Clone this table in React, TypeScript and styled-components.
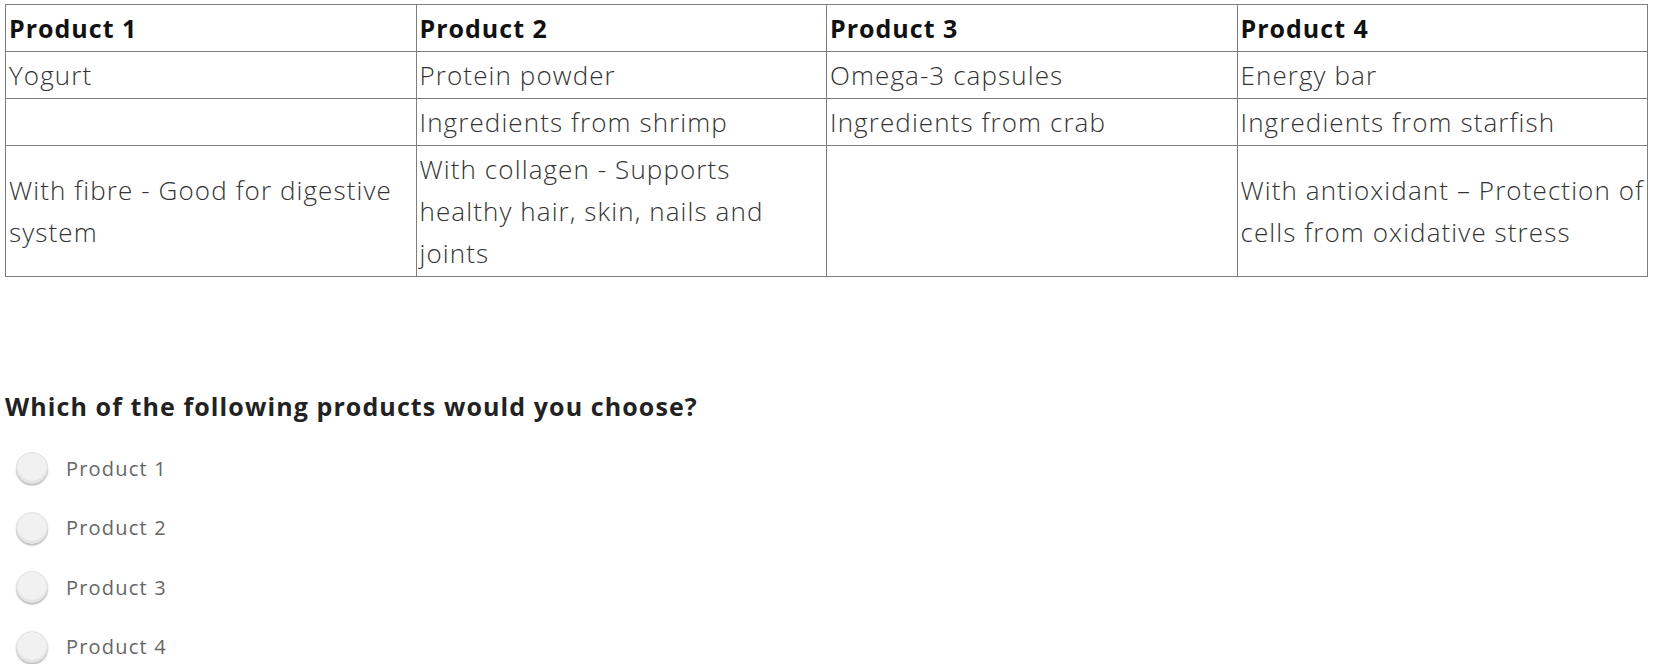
import React from "react";
import styled, { createGlobalStyle } from "styled-components";

const Global = createGlobalStyle`
  html, body { margin: 0; padding: 0; background: #ffffff; }
  body { font-family: "Open Sans", "Lato", sans-serif; }
`;

const Page = styled.div`
  padding: 4px 5px 0 5px;
`;

const Table = styled.table`
  width: 1643px;
  border-collapse: collapse;
  table-layout: fixed;
`;

const Cell = styled.td<{ $head?: boolean }>`
  border: 1px solid #7d7d7d;
  padding: 2px 0 2px 3px;
  font-size: ${(p) => (p.$head ? "25px" : "26px")};
  line-height: 42px;
  letter-spacing: ${(p) => (p.$head ? "1px" : "1.1px")};
  font-weight: ${(p) => (p.$head ? 700 : 300)};
  color: ${(p) => (p.$head ? "#111111" : "#333333")};
  vertical-align: middle;
  text-align: left;
`;

const Question = styled.h3`
  margin: 114px 0 0 0;
  font-size: 25px;
  line-height: 30px;
  letter-spacing: 1.1px;
  font-weight: 700;
  color: #222222;
`;

const Options = styled.div`
  display: flex;
  flex-direction: column;
  gap: 25.5px;
  margin-top: 30px;
  padding-left: 11px;
`;

const Option = styled.label`
  display: flex;
  align-items: center;
  gap: 18px;
  height: 34px;
  cursor: pointer;
`;

const Circle = styled.span`
  width: 32px;
  height: 32px;
  border-radius: 50%;
  box-sizing: border-box;
  border: 1px solid #e2e2e2;
  background: #f1f1f1;
  box-shadow: inset 0 -2px 1px rgba(0, 0, 0, 0.06), 0 1.5px 1.5px rgba(0, 0, 0, 0.28);
`;

const OptionText = styled.span`
  font-size: 20px;
  font-weight: 400;
  letter-spacing: 1.2px;
  color: #666666;
`;

const header = ["Product 1", "Product 2", "Product 3", "Product 4"];
const rows: string[][] = [
  ["Yogurt", "Protein powder", "Omega-3 capsules", "Energy bar"],
  ["", "Ingredients from shrimp", "Ingredients from crab", "Ingredients from starfish"],
  [
    "With fibre - Good for digestive system",
    "With collagen - Supports healthy hair, skin, nails and joints",
    "",
    "With antioxidant – Protection of cells from oxidative stress",
  ],
];

export default function App() {
  return (
    <Page>
      <Global />
      <Table>
        <tbody>
          <tr>
            {header.map((h) => (
              <Cell key={h} $head>
                {h}
              </Cell>
            ))}
          </tr>
          {rows.map((r, i) => (
            <tr key={i}>
              {r.map((c, j) => (
                <Cell key={j}>{c}</Cell>
              ))}
            </tr>
          ))}
        </tbody>
      </Table>
      <Question>Which of the following products would you choose?</Question>
      <Options>
        {header.map((h) => (
          <Option key={h}>
            <Circle />
            <OptionText>{h}</OptionText>
          </Option>
        ))}
      </Options>
    </Page>
  );
}
